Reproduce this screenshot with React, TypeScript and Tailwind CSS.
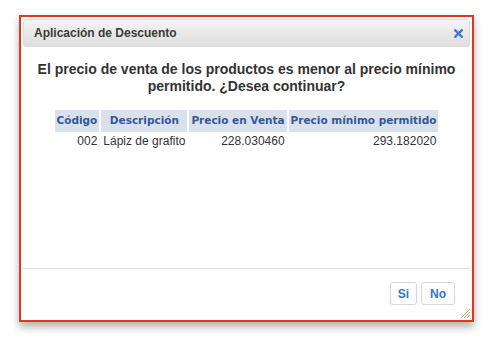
import React from 'react'

const rows = [
  { codigo: '002', descripcion: 'Lápiz de grafito', venta: '228.030460', minimo: '293.182020' },
]

function CloseIcon() {
  return (
    <svg width="9" height="9" viewBox="0 0 9 9" className="block">
      <path d="M1.3 1.3 L7.7 7.7 M7.7 1.3 L1.3 7.7" stroke="#3b7ad9" strokeWidth="2.4" strokeLinecap="square" />
    </svg>
  )
}

function ResizeGrip() {
  return (
    <svg width="12" height="12" viewBox="0 0 12 12" className="block">
      <path d="M11 2 L2 11 M11 5 L5 11 M11 8 L8 11" stroke="#d9a066" strokeWidth="1" />
    </svg>
  )
}

export default function App() {
  return (
    <div className="w-[493px] h-[345px] bg-white pt-[15px] pl-[19px]" style={{ fontFamily: '"Liberation Sans", Arial, sans-serif' }}>
      <div className="relative flex flex-col w-[455px] h-[307px] border-2 border-[#e3361f] bg-white p-[2px] shadow-[0_5px_8px_rgba(0,0,0,0.3)]">
        {/* title bar */}
        <div className="flex items-center justify-between h-[28px] rounded-[3px] border border-[#dcdcdc] bg-gradient-to-b from-[#f4f4f4] to-[#dedede] pl-[10px] pr-[6px]">
          <span className="text-[12px] font-bold text-[#3a3a3a]">Aplicación de Descuento</span>
          <CloseIcon />
        </div>

        <div className="flex-1 flex flex-col items-center pt-[14px]">
          <p className="text-center text-[14px] leading-[17px] font-bold text-[#333] px-[6px]">
            El precio de venta de los productos es menor al precio mínimo permitido. ¿Desea continuar?
          </p>

          <table className="mt-[13px] border-separate border-spacing-[2px] text-[12px] text-[#333]">
            <thead>
              <tr className="bg-[#d9e2ec] text-[#34589a] text-[10.5px] font-bold" style={{ fontFamily: '"DejaVu Sans", Verdana, sans-serif' }}>
                <th className="h-[22px] px-[2px] font-bold">Código</th>
                <th className="h-[22px] px-[5px] font-bold">Descripción</th>
                <th className="h-[22px] px-[2px] font-bold">Precio en Venta</th>
                <th className="h-[22px] px-[2px] font-bold">Precio mínimo permitido</th>
              </tr>
            </thead>
            <tbody>
              {rows.map((r) => (
                <tr key={r.codigo}>
                  <td className="text-right px-[2px] leading-[15px]">{r.codigo}</td>
                  <td className="text-left px-[2px] leading-[15px]">{r.descripcion}</td>
                  <td className="text-right px-[2px] leading-[15px]">{r.venta}</td>
                  <td className="text-right px-[2px] leading-[15px]">{r.minimo}</td>
                </tr>
              ))}
            </tbody>
          </table>
        </div>

        {/* footer */}
        <div className="flex justify-end items-center gap-[4px] h-[50px] border-t border-[#dddddd] pr-[15px]">
          <button className="h-[23px] px-[7px] rounded-[3px] border border-[#d6d6d6] bg-white text-[12px] font-bold text-[#2e74d3]">Si</button>
          <button className="h-[23px] px-[8px] rounded-[3px] border border-[#d6d6d6] bg-white text-[12px] font-bold text-[#2e74d3]">No</button>
        </div>

        <div className="absolute right-[1px] bottom-[1px]">
          <ResizeGrip />
        </div>
      </div>
    </div>
  )
}
